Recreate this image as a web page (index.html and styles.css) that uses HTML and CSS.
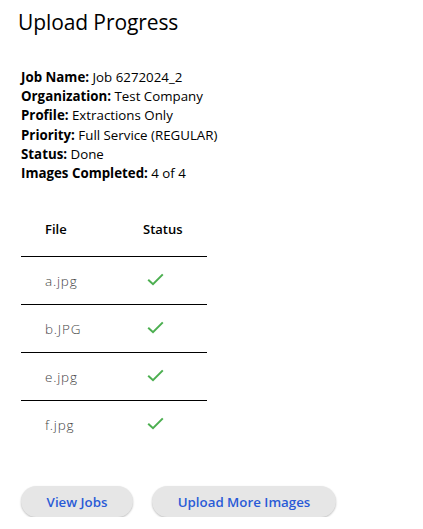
FILE: index.html
```html
<!DOCTYPE html>
<html>
<head>
<meta charset="utf-8">
<link rel="stylesheet" href="styles.css">
</head>
<body>
<div class="page">
  <h1 class="title">Upload Progress</h1>
  <div class="info">
    <div><b>Job Name:</b> Job 6272024_2</div>
    <div><b>Organization:</b> Test Company</div>
    <div><b>Profile:</b> Extractions Only</div>
    <div><b>Priority:</b> Full Service (REGULAR)</div>
    <div><b>Status:</b> Done</div>
    <div><b>Images Completed:</b> 4 of 4</div>
  </div>
  <table class="files">
    <thead>
      <tr><th>File</th><th>Status</th></tr>
    </thead>
    <tbody>
      <tr><td class="name">a.jpg</td><td><svg class="check" viewBox="0 0 17 13" width="17" height="13"><path d="M1.2 6.8 L6 11.2 L15.8 1.4" fill="none" stroke="#4caf50" stroke-width="2"/></svg></td></tr>
      <tr><td class="name">b.JPG</td><td><svg class="check" viewBox="0 0 17 13" width="17" height="13"><path d="M1.2 6.8 L6 11.2 L15.8 1.4" fill="none" stroke="#4caf50" stroke-width="2"/></svg></td></tr>
      <tr><td class="name">e.jpg</td><td><svg class="check" viewBox="0 0 17 13" width="17" height="13"><path d="M1.2 6.8 L6 11.2 L15.8 1.4" fill="none" stroke="#4caf50" stroke-width="2"/></svg></td></tr>
      <tr><td class="name">f.jpg</td><td><svg class="check" viewBox="0 0 17 13" width="17" height="13"><path d="M1.2 6.8 L6 11.2 L15.8 1.4" fill="none" stroke="#4caf50" stroke-width="2"/></svg></td></tr>
    </tbody>
  </table>
  <div class="actions">
    <button class="btn btn-jobs">View Jobs</button>
    <button class="btn btn-upload">Upload More Images</button>
  </div>
</div>
</body>
</html>
```
FILE: styles.css
```css
html, body {
  margin: 0;
  padding: 0;
  background: #fff;
}
body {
  font-family: "Open Sans", "Noto Sans", sans-serif;
  color: #000;
}
.page {
  padding: 8px 0 0 21px;
}
.title {
  font-size: 21px;
  font-weight: 400;
  margin: 0 0 0 -3px;
  line-height: 28px;
  letter-spacing: -0.1px;
}
.info {
  margin-top: 32px;
  font-size: 13.3px;
  line-height: 19.2px;
}
.info b {
  font-weight: 700;
}
.files {
  border-collapse: collapse;
  margin-top: 29px;
  width: 186px;
}
.files th {
  font-size: 13px;
  font-weight: 600;
  text-align: left;
  height: 34px;
  padding: 0 0 10px 0;
  border-bottom: 1px solid #000;
  vertical-align: middle;
}
.files th:first-child, .files td:first-child {
  padding-left: 24px;
  width: 98px;
}
.files td {
  height: 47px;
  padding: 0;
  border-bottom: 1px solid #000;
  vertical-align: middle;
}
.files tr:last-child td {
  border-bottom: none;
}
.files td.name {
  font-family: "Open Sans", "Noto Sans", sans-serif;
  font-weight: 300;
  font-size: 13.5px;
  color: #444;
  letter-spacing: 0.8px;
}
.check {
  display: block;
  margin-left: 4px;
  margin-top: -3px;
}
.actions {
  display: flex;
  gap: 19px;
  margin-top: 38px;
}
.btn {
  font-family: "Open Sans", "Noto Sans", sans-serif;
  font-size: 13.3px;
  font-weight: 600;
  color: #2a5bd7;
  background: #e6e6e6;
  border: none;
  border-radius: 16px;
  height: 31px;
  box-shadow: 0 1px 2px rgba(0,0,0,0.25);
  padding: 0;
}
.btn-jobs { width: 112px; }
.btn-upload { width: 184px; }
```
